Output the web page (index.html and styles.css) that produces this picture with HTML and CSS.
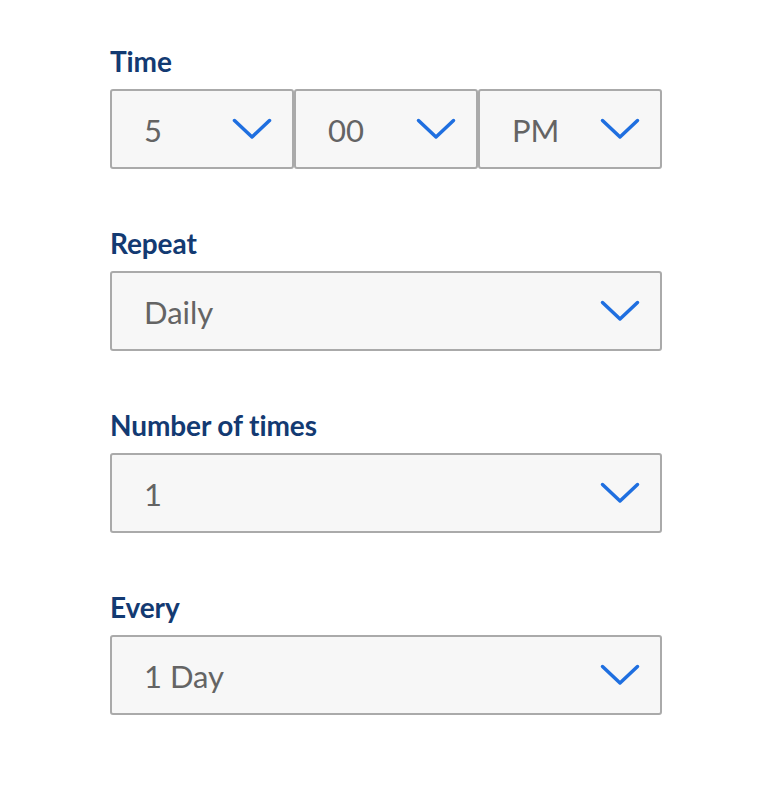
FILE: index.html
```html
<!DOCTYPE html>
<html lang="en">
<head>
<meta charset="utf-8">
<title>Schedule</title>
<link rel="stylesheet" href="styles.css">
</head>
<body>
<form class="form">
  <div class="field">
    <div class="label">Time</div>
    <div class="row">
      <div class="select"><span class="value">5</span><svg class="chev" viewBox="0 0 40 22" width="40" height="22"><polyline points="2.5,2.5 20,19 37.5,2.5"/></svg></div>
      <div class="select"><span class="value">00</span><svg class="chev" viewBox="0 0 40 22" width="40" height="22"><polyline points="2.5,2.5 20,19 37.5,2.5"/></svg></div>
      <div class="select"><span class="value">PM</span><svg class="chev" viewBox="0 0 40 22" width="40" height="22"><polyline points="2.5,2.5 20,19 37.5,2.5"/></svg></div>
    </div>
  </div>
  <div class="field">
    <div class="label">Repeat</div>
    <div class="select"><span class="value">Daily</span><svg class="chev" viewBox="0 0 40 22" width="40" height="22"><polyline points="2.5,2.5 20,19 37.5,2.5"/></svg></div>
  </div>
  <div class="field">
    <div class="label">Number of times</div>
    <div class="select"><span class="value">1</span><svg class="chev" viewBox="0 0 40 22" width="40" height="22"><polyline points="2.5,2.5 20,19 37.5,2.5"/></svg></div>
  </div>
  <div class="field">
    <div class="label">Every</div>
    <div class="select"><span class="value">1 Day</span><svg class="chev" viewBox="0 0 40 22" width="40" height="22"><polyline points="2.5,2.5 20,19 37.5,2.5"/></svg></div>
  </div>
</form>
</body>
</html>
```
FILE: styles.css
```css
html, body {
  margin: 0;
  padding: 0;
  background: #ffffff;
}
body {
  font-family: Lato, "Open Sans", sans-serif;
}
.form {
  width: 552px;
  margin-left: 110px;
  padding-top: 44px;
  display: flex;
  flex-direction: column;
  gap: 57px;
}
.field {
  display: flex;
  flex-direction: column;
  gap: 11px;
}
.label {
  font-size: 28px;
  font-weight: 700;
  line-height: 34px;
  color: #133a72;
  letter-spacing: -0.1px;
}
.row {
  display: flex;
}
.row .select {
  flex: 1 1 0;
}
.select {
  box-sizing: border-box;
  height: 80px;
  border: 2px solid #aaaaaa;
  border-radius: 3px;
  background: #f7f7f7;
  display: flex;
  align-items: center;
  justify-content: space-between;
  padding: 0 20px 0 32px;
}
.value {
  font-size: 31px;
  color: #646464;
  line-height: 36px;
  padding-top: 2px;
}
.chev {
  display: block;
  fill: none;
  stroke: #1f6fe0;
  stroke-width: 3.5;
  stroke-linecap: round;
  stroke-linejoin: round;
}
```
